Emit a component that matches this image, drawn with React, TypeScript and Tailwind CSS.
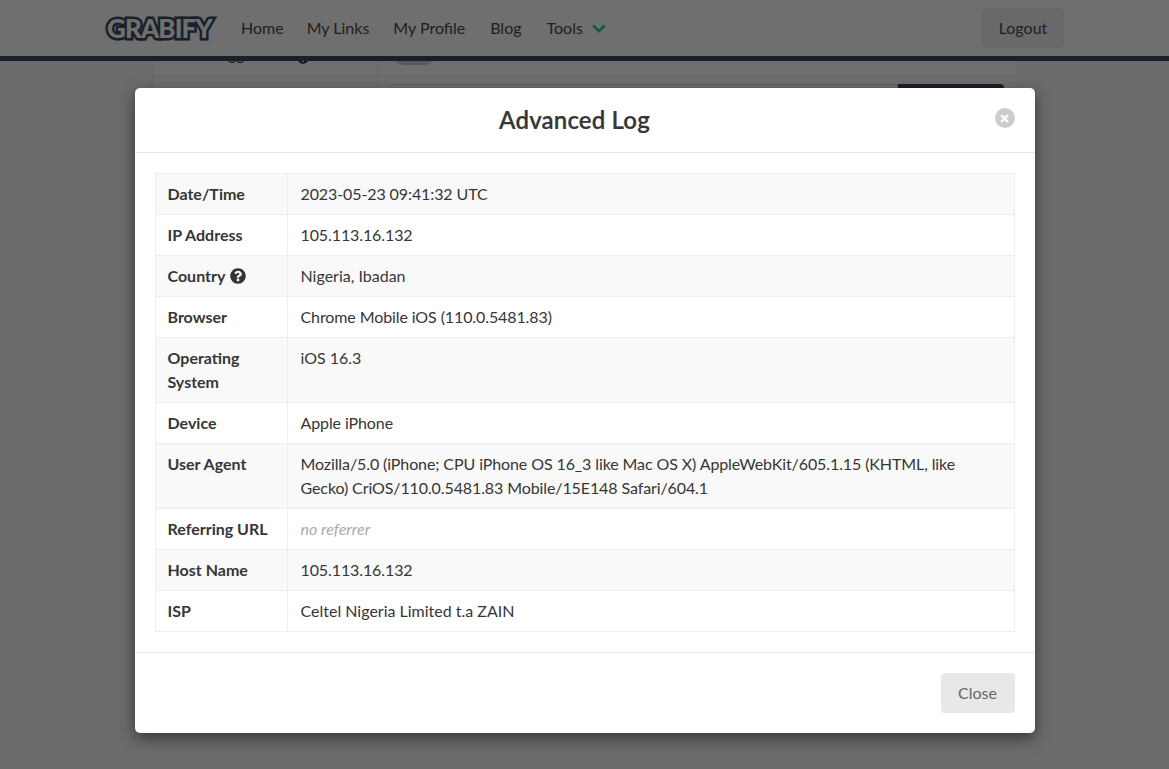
import { FaQuestionCircle } from "react-icons/fa";

const rows: { label: string; value: string; help?: boolean; muted?: boolean; tight?: boolean }[] = [
  { label: "Date/Time", value: "2023-05-23 09:41:32 UTC", tight: true },
  { label: "IP Address", value: "105.113.16.132", tight: true },
  { label: "Country", value: "Nigeria, Ibadan", help: true },
  { label: "Browser", value: "Chrome Mobile iOS (110.0.5481.83)", tight: true },
  { label: "Operating System", value: "iOS 16.3" },
  { label: "Device", value: "Apple iPhone", tight: true },
  {
    label: "User Agent",
    value:
      "Mozilla/5.0 (iPhone; CPU iPhone OS 16_3 like Mac OS X) AppleWebKit/605.1.15 (KHTML, like Gecko) CriOS/110.0.5481.83 Mobile/15E148 Safari/604.1",
    tight: true,
  },
  { label: "Referring URL", value: "no referrer", muted: true },
  { label: "Host Name", value: "105.113.16.132", tight: true },
  { label: "ISP", value: "Celtel Nigeria Limited t.a ZAIN" },
];

export default function App() {
  return (
    <div className="relative h-[769px] overflow-hidden bg-[#f5f5f5] font-['Lato','Liberation_Sans',sans-serif] text-base leading-6 text-[#363636]">
      <header className="relative z-10 flex h-[61px] items-center justify-between border-b-[5px] border-[#374b62] bg-white px-[105px]">
        <div className="flex items-center">
          <span className="w-[112px] whitespace-nowrap pl-[2px] text-[26px] font-black leading-none tracking-[-0.9px] text-white [-webkit-text-stroke:5px_#374b62] [paint-order:stroke_fill]">
            GRABIFY
          </span>
          <nav className="ml-3 flex items-center text-[#4a4a4a]">
            <a className="-mr-px px-3">Home</a>
            <a className="px-3">My Links</a>
            <a className="mr-px px-3">My Profile</a>
            <a className="mr-px px-3">Blog</a>
            <a className="flex items-center gap-[9px] px-3">
              Tools
              <svg width="14" height="9" viewBox="0 0 14 9" fill="none" stroke="#23c9a0" strokeWidth="2.6">
                <path d="M1.2 1.5 7 7.2 12.8 1.5" />
              </svg>
            </a>
          </nav>
        </div>
        <button className="h-10 w-[82px] rounded bg-[#f0f0f0] text-[#4a4a4a]">Logout</button>
      </header>

      <section className="ml-[153px] mt-[-41px] w-[865px] border-x border-[#e8e8e8] bg-white">
        <div className="flex h-[56px] border-b border-[#e8e8e8]">
          <div className="flex w-[224px] items-end gap-[38px] border-r border-[#e8e8e8] pb-[9px] pl-3">
            <span className="whitespace-nowrap">Smart Logger</span>
            <FaQuestionCircle className="mb-[2px] h-3 w-3 text-[#363636]" />
          </div>
          <div className="flex items-end pb-[10px] pl-[14px]">
            <span className="h-6 w-11 rounded-full bg-[#cfcfcf]" />
          </div>
        </div>
        <div className="flex h-[120px]">
          <div className="w-[224px] border-r border-[#e8e8e8]" />
          <div className="flex h-12 flex-1 items-start pl-3 pr-[13px] pt-2">
            <div className="h-10 flex-1 rounded-l border border-[#dbdbdb] bg-white" />
            <div className="h-10 w-[106px] rounded-r bg-[#374b62]" />
          </div>
        </div>
      </section>

      <div className="absolute inset-0 z-20 flex justify-center bg-[rgba(0,0,0,0.565)] pt-[88px]">
        <div className="h-[645px] w-[900px] rounded-[5px] bg-white shadow-[0_5px_15px_rgba(0,0,0,0.5)]">
          <div className="relative flex h-[65px] items-center justify-center border-b border-[#e5e5e5] pr-5">
            <h2 className="text-2xl font-semibold leading-8 tracking-[0.15px] [-webkit-text-stroke:0.2px_#363636]">Advanced Log</h2>
            <button className="absolute right-5 top-5 flex h-5 w-5 items-center justify-center rounded-full bg-[#cccccc]">
              <svg width="9" height="9" viewBox="0 0 9 9" stroke="white" strokeWidth="2.4">
                <path d="M1.2 1.2 7.8 7.8M7.8 1.2 1.2 7.8" />
              </svg>
            </button>
          </div>

          <div className="p-5">
            <table className="w-[860px] table-fixed border-collapse">
              <tbody>
                {rows.map((r, i) => (
                  <tr key={r.label} className={i % 2 === 0 ? "bg-[#f9f9f9]" : "bg-white"}>
                    <th className="w-[132px] border border-[#eeeeee] px-3 py-2 text-left align-top font-bold">
                      {r.label}
                      {r.help && <FaQuestionCircle className="ml-[5px] inline h-4 w-4 align-[-2px] text-[#333333]" />}
                    </th>
                    <td
                      className={`border border-[#eeeeee] py-2 pl-[13px] pr-3 align-top ${
                        r.muted ? "italic text-[#aaaaaa]" : ""
                      } ${r.tight ? "tracking-[-0.1px]" : ""}`}
                    >
                      {r.value}
                    </td>
                  </tr>
                ))}
              </tbody>
            </table>
          </div>

          <div className="flex justify-end border-t border-[#e5e5e5] p-5">
            <button className="h-10 w-[74px] rounded bg-[#e8e8e8] text-[#666666]">Close</button>
          </div>
        </div>
      </div>
    </div>
  );
}
